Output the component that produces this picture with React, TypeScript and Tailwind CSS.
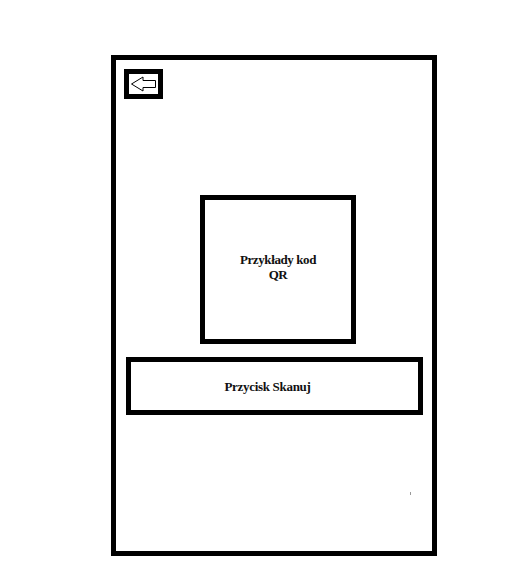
import React from "react";

export default function App() {
  return (
    <div className="w-[521px] h-[585px] bg-white pt-[55px] pl-[111px]" style={{ fontFamily: '"Liberation Serif", "Times New Roman", serif' }}>
      <div className="relative w-[326px] h-[501px] border-[5px] border-black flex flex-col">
        <div className="ml-[8px] mt-[9px] w-[39px] h-[30px] border-[5px] border-black flex items-center justify-center">
          <svg width="29" height="20" viewBox="0 0 29 20">
            <path d="M2.5 10 L14 3 L14 6.5 L26.5 6.5 L26.5 13.5 L14 13.5 L14 17 Z" fill="white" stroke="black" strokeWidth="1" />
          </svg>
        </div>
        <div className="ml-[84px] mt-[96px] w-[156px] h-[149px] border-[5px] border-black flex items-center justify-center">
          <div className="text-center text-[13px] leading-[15px] font-bold text-[#111] tracking-[-0.4px] mb-[5px]">
            Przykłady kod
            <br />
            QR
          </div>
        </div>
        <div className="ml-[10px] mt-[13px] w-[297px] h-[58px] border-[5px] border-black flex items-center justify-center">
          <span className="text-[13px] font-bold text-[#111] tracking-[-0.3px] mr-[14px] mt-[1px]">Przycisk Skanuj</span>
        </div>
        <div className="absolute left-[294px] top-[432px] w-[1px] h-[3px] bg-[#999]" />
      </div>
    </div>
  );
}
